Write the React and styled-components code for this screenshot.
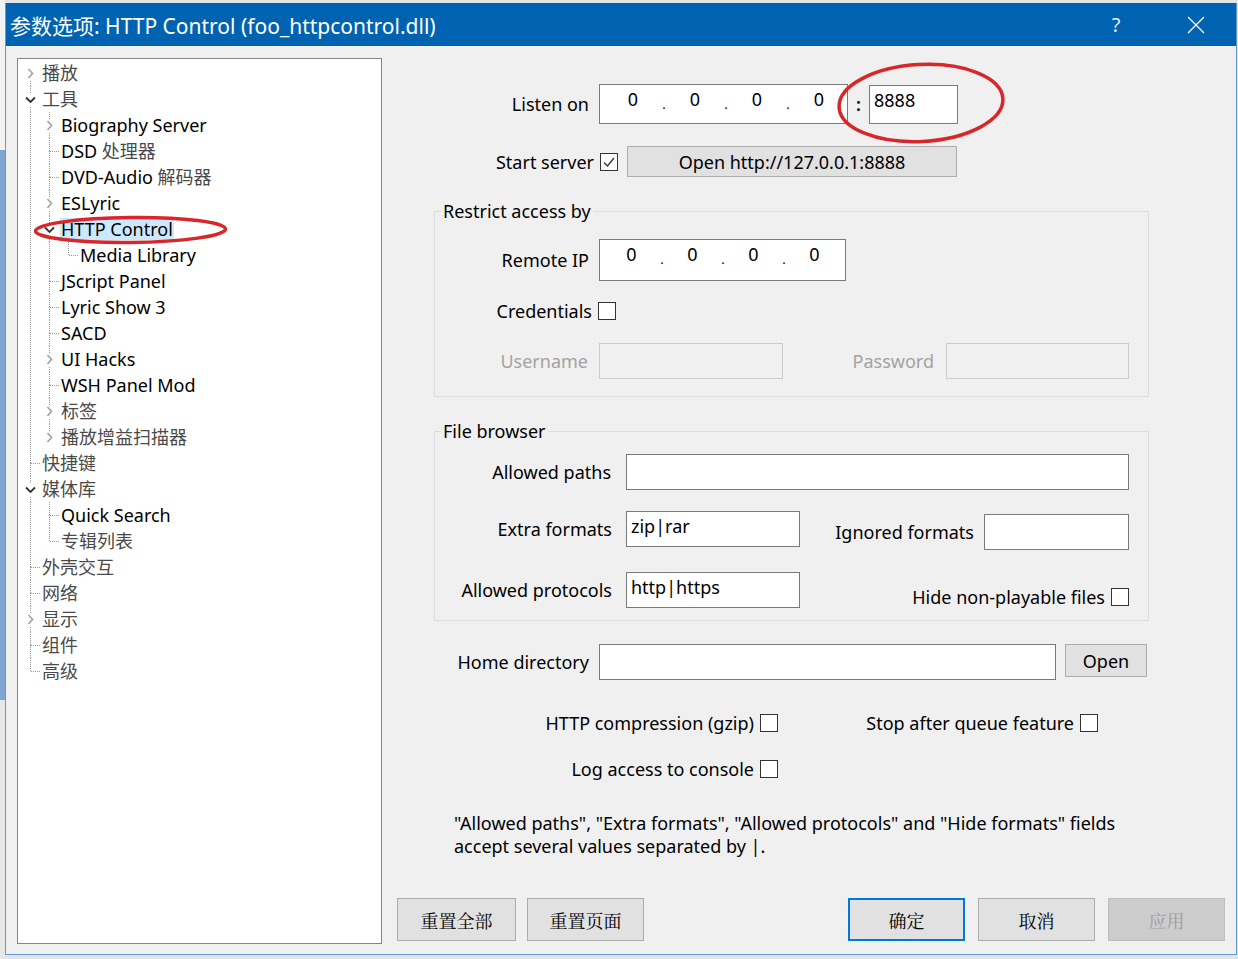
import React from 'react';
import styled, { createGlobalStyle } from 'styled-components';

const ui = `"Noto Sans", "Noto Sans CJK SC", sans-serif`;
const cjk = `"Noto Serif CJK SC", "Noto Sans CJK SC", serif`;

const Global = createGlobalStyle`
  html, body {
    margin: 0;
    padding: 0;
    background: #e4e4e4;
    overflow: hidden;
  }
  * { box-sizing: border-box; }
`;

const Page = styled.div`
  display: flex;
  width: 1238px;
  height: 959px;
  position: relative;
  font-family: ${ui};
`;

const SideStrip = styled.div`
  width: ${p => p.$w}px;
  flex-shrink: 0;
  background: ${p => p.$bg};
`;

const Frame = styled.div`
  width: 1232px;
  height: 952px;
  margin-top: 3px;
  display: flex;
  flex-direction: column;
  border: 1px solid #5d9ad8;
  border-top: none;
  background: #f0f0f0;
`;

const TitleBar = styled.div`
  height: 43px;
  flex-shrink: 0;
  background: #0063b1;
  display: flex;
  align-items: center;
  color: #fff;
`;

const Title = styled.div`
  flex: 1;
  padding-left: 4px;
  font-size: 21px;
  white-space: nowrap;
`;

const CapButton = styled.div`
  width: 80px;
  height: 43px;
  display: flex;
  align-items: center;
  justify-content: center;
  font-size: 20px;
  color: #e6eef8;
`;

const Body = styled.div`
  flex: 1;
  display: flex;
  padding: 12px 0 10px 11px;
`;

const TreeBox = styled.div`
  width: 365px;
  flex-shrink: 0;
  background: #fff;
  border: 1px solid #828790;
  padding: 1px 0 0 3px;
  font-size: 18px;
`;

const TreeRow = styled.div`
  display: flex;
  align-items: center;
  height: 26px;
`;

const NodeLabel = styled.span`
  margin-left: 1px;
  padding: 0 1px;
  line-height: 22px;
  white-space: nowrap;
  color: #000;
  background: ${p => (p.$selected ? '#cce8ff' : 'transparent')};
`;

const Cjk = styled.span`
  color: #4a4a4a;
`;

const Pane = styled.div`
  flex: 1;
  display: flex;
  flex-direction: column;
  padding-right: 11px;
  font-size: 18px;
  color: #000;
`;

const Row = styled.div`
  display: flex;
  align-items: ${p => p.$align || 'center'};
  margin-top: ${p => p.$mt || 0}px;
  margin-left: ${p => p.$ml || 0}px;
`;

const Label = styled.span`
  width: ${p => p.$w}px;
  flex-shrink: 0;
  text-align: right;
  white-space: nowrap;
  margin-right: ${p => p.$gap || 0}px;
  margin-top: ${p => p.$top || 0}px;
  line-height: ${p => p.$lh || '18px'};
  color: ${p => (p.$disabled ? '#a3a3a3' : '#000')};
`;

const Field = styled.div`
  width: ${p => p.$w}px;
  height: ${p => p.$h || 36}px;
  flex-shrink: 0;
  margin-top: ${p => p.$top || 0}px;
  background: ${p => (p.$disabled ? '#f0f0f0' : '#fff')};
  border: 1px solid ${p => (p.$disabled ? '#cccccc' : '#7a7a7a')};
  padding: 1px 4px 0;
  line-height: 26px;
  white-space: nowrap;
`;

const IpField = styled.div`
  width: ${p => p.$w}px;
  height: ${p => p.$h}px;
  flex-shrink: 0;
  display: flex;
  background: #fff;
  border: 1px solid #7a7a7a;
  padding: 1px 0 0 ${p => p.$pad}px;
  line-height: 26px;
`;

const Octet = styled.span`
  width: ${p => p.$w}px;
  text-align: center;
`;

const Dot = styled.span`
  width: 12px;
  text-align: center;
  font-size: 13px;
  line-height: 36px;
`;

const Colon = styled.span`
  width: 21px;
  text-align: center;
  font-weight: 600;
`;

const Check = styled.span`
  width: 18px;
  height: 18px;
  flex-shrink: 0;
  background: #fff;
  border: 1px solid #333;
  display: flex;
  align-items: center;
  justify-content: center;
`;

const PushButton = styled.button`
  width: ${p => p.$w}px;
  height: ${p => p.$h}px;
  flex-shrink: 0;
  margin-left: ${p => p.$ml || 0}px;
  background: ${p => (p.$disabled ? '#cccccc' : '#e1e1e1')};
  border: ${p => (p.$default ? '2px solid #0078d7' : `1px solid ${p.$disabled ? '#bfbfbf' : '#adadad'}`)};
  color: ${p => (p.$disabled ? '#9d9d9d' : '#000')};
  font-family: ${p => (p.$cjk ? cjk : ui)};
  font-size: 18px;
  padding: 0;
  cursor: default;
`;

const Group = styled.fieldset`
  margin: ${p => p.$mt}px 0 0 52px;
  width: 715px;
  border: 1px solid #dcdcdc;
  padding: 0 0 ${p => p.$pb}px 0;
  min-width: 0;
`;

const Legend = styled.legend`
  margin-left: 6px;
  padding: 0 2px;
  line-height: 24px;
  font-size: 18px;
`;

const Spacer = styled.div`
  margin-left: auto;
  display: flex;
  align-items: center;
  margin-right: ${p => p.$mr || 0}px;
  margin-bottom: ${p => p.$mb || 0}px;
  align-self: ${p => p.$self || 'auto'};
`;

const Note = styled.div`
  margin: 34px 0 0 72px;
  line-height: 23px;
`;

const ButtonBar = styled.div`
  display: flex;
  margin: auto 0 3px 15px;
`;

const Annotations = styled.svg`
  position: absolute;
  left: 0;
  top: 0;
  pointer-events: none;
`;

const tree = [
  { label: <Cjk>播放</Cjk>, state: 'closed' },
  {
    label: <Cjk>工具</Cjk>,
    state: 'open',
    kids: [
      { label: 'Biography Server', state: 'closed' },
      { label: <>DSD <Cjk>处理器</Cjk></> },
      { label: <>DVD-Audio <Cjk>解码器</Cjk></> },
      { label: 'ESLyric', state: 'closed' },
      { label: 'HTTP Control', state: 'open', selected: true, kids: [{ label: 'Media Library' }] },
      { label: 'JScript Panel' },
      { label: 'Lyric Show 3' },
      { label: 'SACD' },
      { label: 'UI Hacks', state: 'closed' },
      { label: 'WSH Panel Mod' },
      { label: <Cjk>标签</Cjk>, state: 'closed' },
      { label: <Cjk>播放增益扫描器</Cjk>, state: 'closed' },
    ],
  },
  { label: <Cjk>快捷键</Cjk> },
  {
    label: <Cjk>媒体库</Cjk>,
    state: 'open',
    kids: [{ label: 'Quick Search' }, { label: <Cjk>专辑列表</Cjk> }],
  },
  { label: <Cjk>外壳交互</Cjk> },
  { label: <Cjk>网络</Cjk> },
  { label: <Cjk>显示</Cjk>, state: 'closed' },
  { label: <Cjk>组件</Cjk> },
  { label: <Cjk>高级</Cjk> },
];

const flatten = (nodes, depth = 0, guides = [], out = []) => {
  nodes.forEach((n, i) => {
    const last = i === nodes.length - 1;
    out.push({ n, guides, top: !(depth === 0 && i === 0), bottom: !last });
    if (n.state === 'open') flatten(n.kids, depth + 1, [...guides, !last], out);
  });
  return out;
};

const dots = { stroke: '#9a9a9a', strokeWidth: 1, strokeDasharray: '1 1' };

const Guide = ({ on }) => (
  <svg width="19" height="26">
    {on && <line x1="9.5" y1="0" x2="9.5" y2="26" {...dots} />}
  </svg>
);

const Connector = ({ top, bottom, state }) => (
  <svg width="19" height="26">
    {top && <line x1="9.5" y1="0" x2="9.5" y2="13" {...dots} />}
    {bottom && <line x1="9.5" y1="13" x2="9.5" y2="26" {...dots} />}
    {!state && <line x1="10" y1="13.5" x2="19" y2="13.5" {...dots} />}
    {state && <rect x="3" y="7" width="13" height="13" fill="#fff" />}
    {state === 'closed' && (
      <polyline points="7.5,9 11.5,13.5 7.5,18" fill="none" stroke="#a6a6a6" strokeWidth="1.8" />
    )}
    {state === 'open' && (
      <polyline points="5,11.5 9.5,16 14,11.5" fill="none" stroke="#333" strokeWidth="1.8" />
    )}
  </svg>
);

const Tick = () => (
  <svg width="14" height="14" viewBox="0 0 14 14">
    <polyline points="2,7.5 5.5,11 12,3" fill="none" stroke="#333" strokeWidth="1.3" />
  </svg>
);

const CheckBox = ({ checked }) => <Check>{checked && <Tick />}</Check>;

const Ip = ({ w, h, pad, octet }) => (
  <IpField $w={w} $h={h} $pad={pad}>
    <Octet $w={octet}>0</Octet>
    <Dot>.</Dot>
    <Octet $w={octet}>0</Octet>
    <Dot>.</Dot>
    <Octet $w={octet}>0</Octet>
    <Dot>.</Dot>
    <Octet $w={octet}>0</Octet>
  </IpField>
);

export default function App() {
  const rows = flatten(tree);
  return (
    <Page>
      <Global />
      <SideStrip $w={5} $bg="linear-gradient(#f2f2f2 0 150px, #7fa6d3 150px 700px, #e8e8e8 700px)" />
      <Frame>
        <TitleBar>
          <Title>参数选项: HTTP Control (foo_httpcontrol.dll)</Title>
          <CapButton>?</CapButton>
          <CapButton>
            <svg width="18" height="18" viewBox="0 0 18 18">
              <path d="M1 1 L17 17 M17 1 L1 17" stroke="#fff" strokeWidth="1.3" />
            </svg>
          </CapButton>
        </TitleBar>
        <Body>
          <TreeBox>
            {rows.map((r, i) => (
              <TreeRow key={i}>
                {r.guides.map((g, j) => (
                  <Guide key={j} on={g} />
                ))}
                <Connector top={r.top} bottom={r.bottom} state={r.n.state} />
                <NodeLabel $selected={r.n.selected}>{r.n.label}</NodeLabel>
              </TreeRow>
            ))}
          </TreeBox>

          <Pane>
            <Row $mt={26}>
              <Label $w={207} $gap={10}>Listen on</Label>
              <Ip w={249} h={40} pad={8} octet={50} />
              <Colon>:</Colon>
              <Field $w={89} $h={39}>8888</Field>
            </Row>

            <Row $mt={22}>
              <Label $w={212} $gap={6}>Start server</Label>
              <CheckBox checked />
              <PushButton $w={330} $h={31} $ml={9}>Open http://127.0.0.1:8888</PushButton>
            </Row>

            <Group $mt={22} $pb={17}>
              <Legend>Restrict access by</Legend>
              <Row $mt={16}>
                <Label $w={154} $gap={10}>Remote IP</Label>
                <Ip w={247} h={42} pad={7} octet={49} />
              </Row>
              <Row $mt={21}>
                <Label $w={157} $gap={6}>Credentials</Label>
                <CheckBox />
              </Row>
              <Row $mt={23}>
                <Label $w={153} $gap={11} $disabled>Username</Label>
                <Field $w={184} $disabled />
                <Label $w={151} $gap={12} $disabled>Password</Label>
                <Field $w={183} $disabled />
              </Row>
            </Group>

            <Group $mt={22} $pb={12}>
              <Legend>File browser</Legend>
              <Row $mt={11}>
                <Label $w={176} $gap={15}>Allowed paths</Label>
                <Field $w={503} />
              </Row>
              <Row $mt={21} $align="flex-start">
                <Label $w={177} $gap={14} $lh="36px">Extra formats</Label>
                <Field $w={174}>zip|rar</Field>
                <Label $w={174} $gap={10} $lh="36px" $top={3}>Ignored formats</Label>
                <Field $w={145} $top={3} />
              </Row>
              <Row $mt={22}>
                <Label $w={177} $gap={14}>Allowed protocols</Label>
                <Field $w={174}>http|https</Field>
                <Spacer $mr={19} $mb={2} $self="flex-end">
                  <Label $w={200} $gap={6}>Hide non-playable files</Label>
                  <CheckBox />
                </Spacer>
              </Row>
            </Group>

            <Row $mt={23} $align="flex-start">
              <Label $w={207} $gap={10} $lh="36px">Home directory</Label>
              <Field $w={457} />
              <PushButton $w={82} $h={33} $ml={9}>Open</PushButton>
            </Row>

            <Row $mt={34}>
              <Label $w={372} $gap={6}>HTTP compression (gzip)</Label>
              <CheckBox />
              <Label $w={296} $gap={6}>Stop after queue feature</Label>
              <CheckBox />
            </Row>

            <Row $mt={28}>
              <Label $w={372} $gap={6}>Log access to console</Label>
              <CheckBox />
            </Row>

            <Note>
              "Allowed paths", "Extra formats", "Allowed protocols" and "Hide formats" fields
              <br />
              accept several values separated by |.
            </Note>

            <ButtonBar>
              <PushButton $w={119} $h={43} $cjk>重置全部</PushButton>
              <PushButton $w={117} $h={43} $ml={11} $cjk>重置页面</PushButton>
              <Spacer>
                <PushButton $w={117} $h={43} $default $cjk>确定</PushButton>
                <PushButton $w={117} $h={43} $ml={13} $cjk>取消</PushButton>
                <PushButton $w={117} $h={43} $ml={13} $disabled $cjk>应用</PushButton>
              </Spacer>
            </ButtonBar>
          </Pane>
        </Body>
      </Frame>
      <SideStrip $w={1} $bg="#e4e4e4" />

      <Annotations width="1238" height="959">
        <ellipse cx="130.5" cy="230" rx="95" ry="12.5" fill="none" stroke="#d9262b" strokeWidth="3.5" transform="rotate(-0.6 130 230)" />
        <ellipse cx="921" cy="103" rx="82" ry="38.5" fill="none" stroke="#d9262b" strokeWidth="3.5" transform="rotate(-3 921 103)" />
      </Annotations>
    </Page>
  );
}
